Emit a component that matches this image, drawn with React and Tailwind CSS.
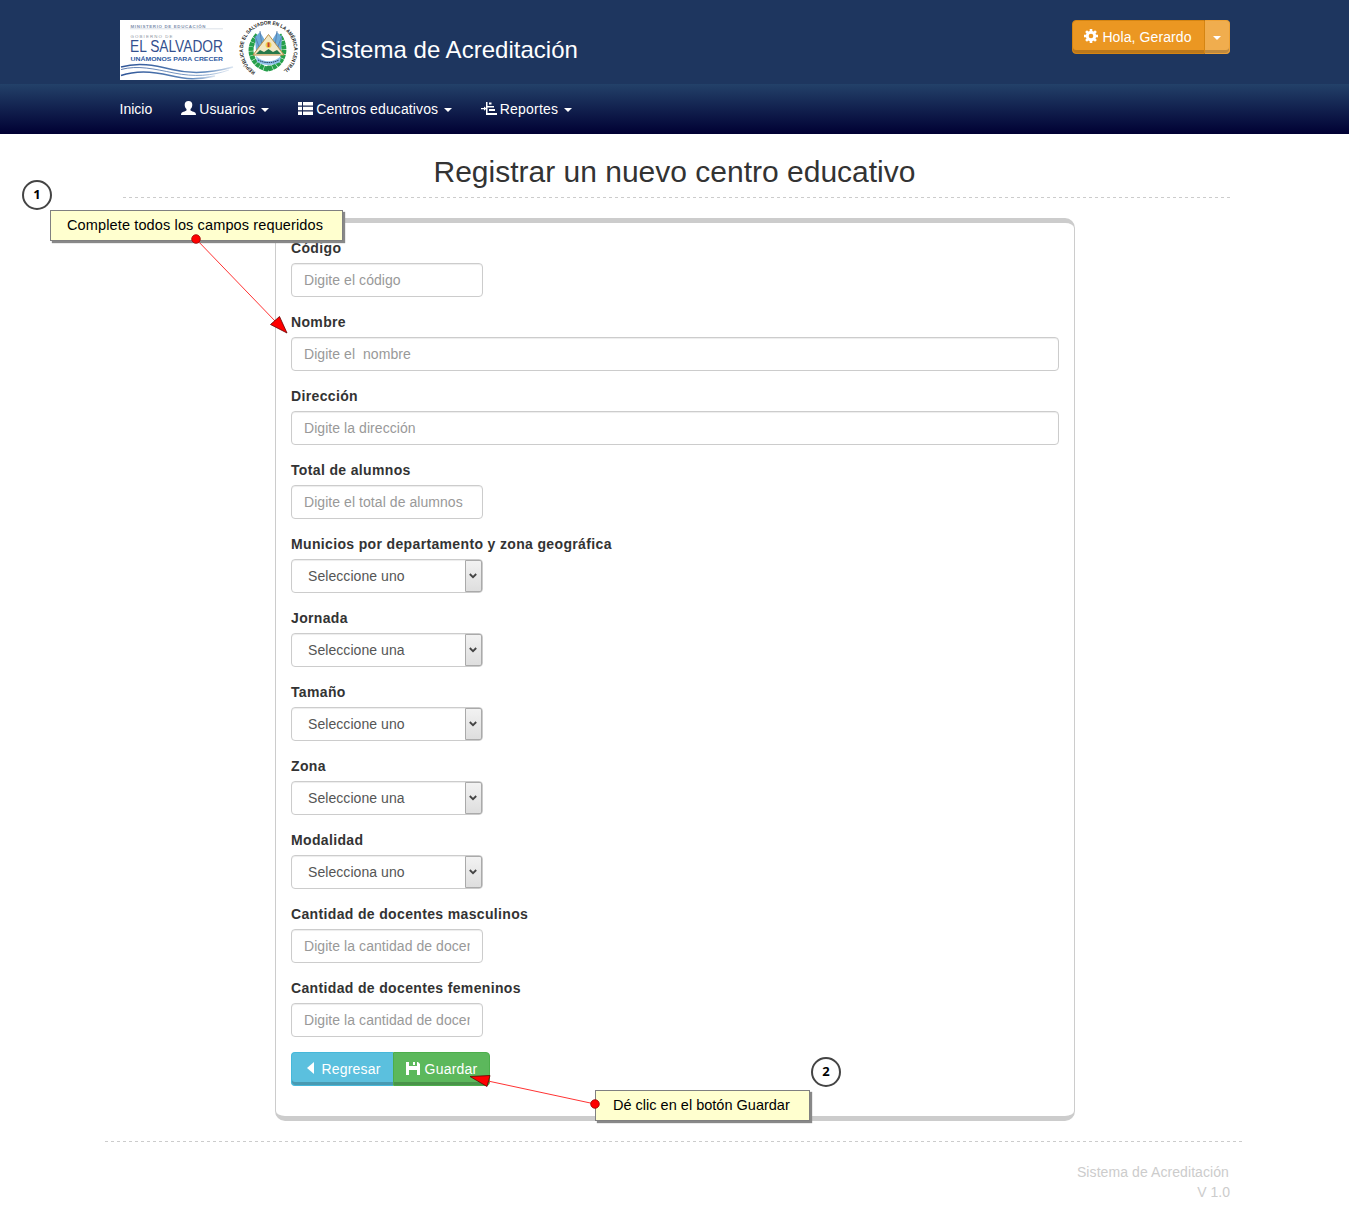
import React from 'react';

const FIELDS = [
  { label: 'Código', placeholder: 'Digite el código' },
  { label: 'Nombre', placeholder: 'Digite el  nombre', wide: true },
  { label: 'Dirección', placeholder: 'Digite la dirección', wide: true },
  { label: 'Total de alumnos', placeholder: 'Digite el total de alumnos' },
  { label: 'Municios por departamento y zona geográfica', select: 'Seleccione uno' },
  { label: 'Jornada', select: 'Seleccione una' },
  { label: 'Tamaño', select: 'Seleccione uno' },
  { label: 'Zona', select: 'Seleccione una' },
  { label: 'Modalidad', select: 'Selecciona uno' },
  { label: 'Cantidad de docentes masculinos', placeholder: 'Digite la cantidad de docentes' },
  { label: 'Cantidad de docentes femeninos', placeholder: 'Digite la cantidad de docentes' },
];

function Caret({ className = '' }) {
  return (
    <svg className={`h-1 w-2 shrink-0 ${className}`} viewBox="0 0 8 4" fill="currentColor">
      <path d="M0 0h8L4 4z" />
    </svg>
  );
}

function CogIcon() {
  return (
    <svg className="relative -top-px h-3.5 w-3.5" viewBox="0 0 14 14">
      <g fill="#fff">
        <rect x="5.7" y="0" width="2.6" height="14" />
        <rect x="5.7" y="0" width="2.6" height="14" transform="rotate(45 7 7)" />
        <rect x="5.7" y="0" width="2.6" height="14" transform="rotate(90 7 7)" />
        <rect x="5.7" y="0" width="2.6" height="14" transform="rotate(135 7 7)" />
        <circle cx="7" cy="7" r="5.2" />
      </g>
      <circle cx="7" cy="7" r="2.3" fill="#eb9722" />
    </svg>
  );
}

function UserIcon() {
  return (
    <svg className="relative -top-px h-3.5 w-[15px]" viewBox="0 0 15 14" fill="#fff">
      <path d="M7.500 0C10 0 11.300 1.500 11.300 3.700c0 1.900-.6 3.400-1.800 4.400v1.200c.4.700 1.500 1 3 1.500 1.700.6 2.500 1.200 2.500 3.200H0c0-2 .8-2.600 2.500-3.200 1.500-.5 2.600-.8 3-1.500V8.100C4.300 7.100 3.700 5.600 3.700 3.700 3.700 1.500 5 0 7.500 0z" />
    </svg>
  );
}

function ListIcon() {
  return (
    <svg className="relative -top-px h-[13px] w-[15px]" viewBox="0 0 15 13" fill="#fff">
      <path d="M0 0h4v3.500H0zM5 0h10v3.500H5zM0 4.700h4v3.600H0zM5 4.700h10v3.600H5zM0 9.500h4V13H0zM5 9.500h10V13H5z" />
    </svg>
  );
}

function TreeIcon() {
  return (
    <svg className="relative -top-px h-[13px] w-4" viewBox="0 0 16 13" fill="#fff">
      <path d="M5 0h1.500v13H5zM0 6h5v1.200H0zM3 4.500l2.500 2.100L3 8.700zM8 0.500h2.500v2H8zM6 4h7v1.500H6zM8 7h6v2H8zM6 11h10v2H6z" />
    </svg>
  );
}

function FloppyIcon() {
  return (
    <svg className="relative -top-px h-[13px] w-3.5" viewBox="0 0 14 13" fill="#fff">
      <path d="M0 0h3v4h8V0h1l2 2v11h-3V8H3v5H0zM7 0h2v3H7z" />
    </svg>
  );
}

function Logo() {
  return (
    <svg className="h-[60px] w-[180px] bg-white" viewBox="0 0 180 60" fontFamily="Liberation Sans, Arial, sans-serif">
      <defs>
        <path id="sealArc" d="M135.500 51.900A25.500 25.500 0 1 1 161.500 51.900" />
        <linearGradient id="waveFade">
          <stop offset="0" stopColor="#2f5597" />
          <stop offset=".75" stopColor="#5f88bb" />
          <stop offset="1" stopColor="#dce6f2" />
        </linearGradient>
      </defs>
      <text x="10.500" y="7.800" fontSize="4.400" fontWeight="bold" fill="#8190ad" textLength="75">MINISTERIO DE EDUCACIÓN</text>
      <path d="M10 8.800h93" stroke="#b9c2d3" strokeWidth=".5" />
      <text x="10.500" y="18" fontSize="4.400" fill="#8c93a0" textLength="42">GOBIERNO DE</text>
      <text x="10" y="32" fontSize="16" fill="#34508e" textLength="93" lengthAdjust="spacingAndGlyphs">EL SALVADOR</text>
      <text x="10.500" y="41" fontSize="5.800" fontWeight="bold" fill="#2d59a0" textLength="92.500" lengthAdjust="spacingAndGlyphs">UNÁMONOS PARA CRECER</text>
      <g fill="none" stroke="url(#waveFade)">
        <path d="M1 47C18 42 34 45 52 49.500S88 54 113 47" strokeWidth="1.500" />
        <path d="M1 49.500C18 45 34 49 54 53S92 56 109 50" strokeWidth=".8" />
        <path d="M1 55.500C18 49.500 34 51.500 50 55.500S78 60 95 56" strokeWidth="1.500" />
      </g>
      <path d="M137.500 15C125 29 132 46 147 49c16-2 22-20 12-34" fill="none" stroke="#25a04b" strokeWidth="5" strokeDasharray="4 .5" />
      <path d="M136 31l-1-14 5-5 6 10zM161 31l1-14-5-5-6 10z" fill="#6ca9d8" />
      <path d="M140 11l3 23M157 11l-3 23M135 16l6 16M162 16l-6 16" stroke="#577eae" strokeWidth=".9" />
      <path d="M148.500 14.500L164 35h-31z" fill="#f1e7c4" stroke="#b98e47" strokeWidth="1" />
      <circle cx="148.500" cy="25" r="3" fill="#f0cf4b" />
      <path d="M147.500 22.500h2v4.500h-2z" fill="#c8402e" />
      <path d="M136 34l4-4 4 2 4.500-3 4.500 3 4-2 4 4z" fill="#27794a" />
      <path d="M136 36c7 7 18 7 25 0l-1 6c-7 4-16 4-23 0z" fill="#8fc3e9" />
      <path d="M138 40c7 3.500 14 3.500 21 0" fill="none" stroke="#263e60" strokeDasharray="1.500 .7" />
      <circle cx="148.500" cy="48" r="2.500" fill="#29944c" />
      <text fontSize="5.200" fontWeight="bold" fill="#222" textLength="130" lengthAdjust="spacingAndGlyphs"><textPath href="#sealArc">REPÚBLICA DE EL SALVADOR EN LA AMÉRICA CENTRAL</textPath></text>
    </svg>
  );
}

function NavItem({ icon, children, caret = true, className = '' }) {
  return (
    <a className={`flex h-[50px] items-center gap-[3px] text-[14px] leading-5 text-white ${className}`}>
      {icon}
      <span>{children}</span>
      {caret && <Caret className="ml-[3px] mt-0.5" />}
    </a>
  );
}

function DashedRule({ className }) {
  return <div className={`h-px bg-[repeating-linear-gradient(90deg,#ccc_0_3px,transparent_3px_6px)] ${className}`} />;
}

function SelectBox({ value }) {
  return (
    <div className="flex h-[34px] w-48 items-stretch rounded-[4px] border border-[#ccc] bg-white pl-4 shadow-[inset_0_1px_1px_rgba(0,0,0,0.075)]">
      <span className="flex-1 self-center leading-5 tracking-[0.060px] text-[#555]">{value}</span>
      <span className="flex w-[17px] items-center justify-center rounded-r-[2px] border border-[#aaa] bg-linear-to-b from-[#f2f2f2] to-[#dedede] pr-px">
        <svg className="h-[6px] w-[8px]" viewBox="0 0 8 6" fill="none" stroke="#444" strokeWidth="1.800">
          <path d="M.8 1l3.200 3.200L7.200 1" />
        </svg>
      </span>
    </div>
  );
}

function Field({ field }) {
  return (
    <div className="mb-[15px]">
      <label className="mb-[5px] block font-bold leading-5 tracking-[0.350px]">{field.label}</label>
      {field.select ? (
        <SelectBox value={field.select} />
      ) : (
        <input
          placeholder={field.placeholder}
          className={`block h-[34px] rounded-[4px] border border-[#ccc] bg-white px-3 text-[14px] tracking-[0.060px] shadow-[inset_0_1px_1px_rgba(0,0,0,0.075)] placeholder:text-[#999] ${field.wide ? 'w-full' : 'w-48'}`}
        />
      )}
    </div>
  );
}

function Step({ n, className }) {
  return (
    <div className={`absolute flex size-[30px] items-center justify-center rounded-full border-2 border-[#444] bg-white font-['Noto_Sans',sans-serif] text-[13px] font-bold text-black ${className}`}>
      {n}
    </div>
  );
}

function Note({ children, className }) {
  return (
    <div className={`absolute flex h-[31px] items-center whitespace-nowrap border border-[#808080] bg-[#ffffcf] text-[14.500px] text-black shadow-[2px_2px_1px_#888] ${className}`}>
      {children}
    </div>
  );
}

export default function App() {
  return (
    <div className="relative h-[1222px] w-[1349px] overflow-hidden bg-white font-['Liberation_Sans',Arial,sans-serif] text-[14px] text-[#333]">
      <header className="h-[84px] bg-[#1e365f]">
        <div className="mx-auto flex w-[1110px] items-start pt-5">
          <Logo />
          <div className="ml-[20.500px] flex h-[60px] items-center text-[24px] tracking-[0.020px] text-white">Sistema de Acreditación</div>
          <div className="ml-auto flex h-[34px] text-white">
            <button className="flex w-[133px] items-center justify-center gap-1 rounded-l-[4px] border border-[#d58512] bg-[#eb9722] shadow-[inset_0_-3px_0_#bc781b]">
              <CogIcon />
              <span className="tracking-[0.100px]">Hola, Gerardo</span>
            </button>
            <button className="flex w-[25px] items-center justify-center rounded-r-[4px] border border-l-0 border-[#eea236] bg-[#f0ad4e] shadow-[inset_0_-3px_0_#c08a3e]">
              <Caret className="mt-0.5" />
            </button>
          </div>
        </div>
      </header>
      <nav className="h-[50px] bg-[linear-gradient(to_bottom,#234169,#000033)]">
        <div className="mx-auto flex w-[1110px]">
          <NavItem caret={false}>Inicio</NavItem>
          <NavItem icon={<UserIcon />} className="ml-[29px] tracking-[0.100px]">Usuarios</NavItem>
          <NavItem icon={<ListIcon />} className="ml-[29px] tracking-[0.120px]">Centros educativos</NavItem>
          <NavItem icon={<TreeIcon />} className="ml-[28.500px] tracking-[0.200px]">Reportes</NavItem>
        </div>
      </nav>

      <main>
        <h1 className="mt-[21px] text-center text-[30px] leading-[33px]">Registrar un nuevo centro educativo</h1>
        <DashedRule className="ml-[123px] mt-[9px] w-[1107px]" />
        <form className="ml-[275px] mt-5 h-[903px] w-[800px] rounded-[10px] border-x border-y-[5px] border-[#ccc] p-[15px]">
          {FIELDS.map((f) => (
            <Field key={f.label} field={f} />
          ))}
          <div className="flex h-[34px] text-white">
            <button type="button" className="flex w-[102px] items-center justify-center gap-[7px] rounded-l-[4px] border border-r-0 border-[#46b8da] bg-[#5bc0de] pl-[3px] shadow-[inset_0_-3px_0_#499ab2]">
              <svg className="relative -top-px h-3 w-[7px]" viewBox="0 0 7 12" fill="#fff"><path d="M7 0v12L0 6z" /></svg>
              <span className="tracking-[0.200px]">Regresar</span>
            </button>
            <button type="button" className="flex w-[97px] items-center justify-center gap-[5px] rounded-r-[4px] border border-[#4cae4c] bg-[#5cb85c] shadow-[inset_0_-3px_0_#4a934a]">
              <FloppyIcon />
              <span className="tracking-[0.200px]">Guardar</span>
            </button>
          </div>
        </form>
      </main>

      <footer>
        <DashedRule className="ml-[105px] mt-5 w-[1137px]" />
        <div className="mr-[119px] mt-5 text-right leading-5 text-[#ccc]">
          <p className="mr-px tracking-[0.080px]">Sistema de Acreditación</p>
          <p>V 1.0</p>
        </div>
      </footer>

      <Step n="1" className="left-[22px] top-[180px]" />
      <Step n="2" className="left-[811px] top-[1057px]" />
      <Note className="left-[50px] top-[210px] w-[293px] pl-[16px] tracking-[0.130px]">Complete todos los campos requeridos</Note>
      <Note className="left-[595px] top-[1090px] w-[215px] pl-[17px] tracking-[0.010px]">Dé clic en el botón Guardar</Note>
      <svg className="pointer-events-none absolute left-[180px] top-[230px] h-[110px] w-[115px]" viewBox="180 230 115 110">
        <path d="M196 239L275 321" stroke="#f33" strokeWidth="1" />
        <path d="M287 333L270.500 324.500L279.500 316.500z" fill="red" stroke="#600" strokeWidth=".8" />
        <circle cx="196" cy="239" r="4.300" fill="red" stroke="#900" strokeWidth=".8" />
      </svg>
      <svg className="pointer-events-none absolute left-[465px] top-[1070px] h-[45px] w-[140px]" viewBox="465 1070 140 45">
        <path d="M488 1081L595 1104" stroke="#f33" strokeWidth="1" />
        <path d="M470 1076.500L490 1075.500L487 1086.500z" fill="red" stroke="#600" strokeWidth=".8" />
        <circle cx="595" cy="1104" r="4.300" fill="red" stroke="#900" strokeWidth=".8" />
      </svg>
    </div>
  );
}
